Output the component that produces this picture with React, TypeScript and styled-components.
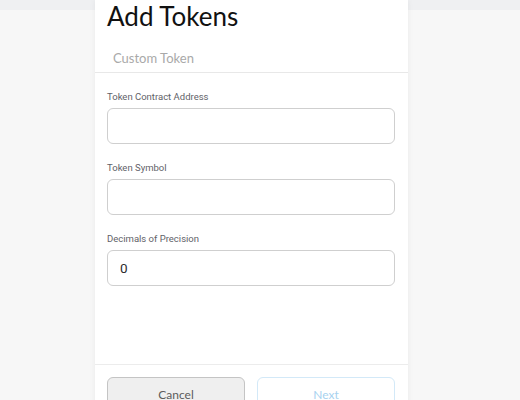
import React from 'react';
import styled, { createGlobalStyle } from 'styled-components';

const GlobalStyle = createGlobalStyle`
  html, body {
    margin: 0;
    padding: 0;
    height: 100%;
    overflow: hidden;
  }
  body {
    background: linear-gradient(#eff0f2 0, #eff0f2 10px, #f7f7f7 10px);
    font-family: Roboto, "Liberation Sans", sans-serif;
  }
`;

const Page = styled.div`
  display: flex;
  padding-left: 95px;
  height: 400px;
`;

const Card = styled.div`
  width: 313px;
  height: 453px;
  background: #fff;
  box-shadow: 0 0 6px rgba(0, 0, 0, 0.06);
  display: flex;
  flex-direction: column;
`;

const Header = styled.div`
  padding: 0 12px;
  border-bottom: 1px solid #e8e8e8;
`;

const Title = styled.h1`
  margin: -1px 0 0;
  font-family: Lato, "Open Sans", sans-serif;
  font-weight: 400;
  font-size: 26px;
  line-height: 34px;
  color: #111;
`;

const Tab = styled.div`
  padding: 17px 0 6px 6px;
  font-family: Lato, "Open Sans", sans-serif;
  font-size: 13px;
  line-height: 16px;
  color: #a9a9a9;
`;

const Form = styled.div`
  flex: 1;
  padding: 17px 12px 0;
  display: flex;
  flex-direction: column;
  gap: 17px;
`;

const Field = styled.div`
  display: flex;
  flex-direction: column;
  gap: 4px;
`;

const Label = styled.label`
  font-size: 9.5px;
  line-height: 14px;
  color: #5f6268;
`;

const Input = styled.input`
  box-sizing: border-box;
  width: 288px;
  height: 36px;
  border: 1px solid #cfcfcf;
  border-radius: 6px;
  padding: 0 12px;
  font-family: Roboto, "Liberation Sans", sans-serif;
  font-size: 13.5px;
  color: #2c2c2c;
  outline: none;
`;

const Footer = styled.div`
  height: 76px;
  border-top: 1px solid #ececec;
  padding: 12px 12px 0;
  display: flex;
  align-items: flex-start;
  gap: 12px;
`;

const Button = styled.button<{ variant: 'default' | 'primary' }>`
  box-sizing: border-box;
  width: 138px;
  height: 33px;
  border-radius: 6px;
  font-family: Lato, "Open Sans", sans-serif;
  font-size: 12px;
  padding: 1px 0 0;
  border: 1px solid ${p => (p.variant === 'primary' ? '#d3e9f8' : '#c4c4c4')};
  background: ${p => (p.variant === 'primary' ? '#fff' : '#efefef')};
  color: ${p => (p.variant === 'primary' ? '#a7d2ef' : '#5c5c5c')};
`;

const fields = [
  { label: 'Token Contract Address', value: '' },
  { label: 'Token Symbol', value: '' },
  { label: 'Decimals of Precision', value: '0' },
];

export default function App() {
  return (
    <>
      <GlobalStyle />
      <Page>
        <Card>
          <Header>
            <Title>Add Tokens</Title>
            <Tab>Custom Token</Tab>
          </Header>
          <Form>
            {fields.map(f => (
              <Field key={f.label}>
                <Label>{f.label}</Label>
                <Input defaultValue={f.value} />
              </Field>
            ))}
          </Form>
          <Footer>
            <Button variant="default">Cancel</Button>
            <Button variant="primary">Next</Button>
          </Footer>
        </Card>
      </Page>
    </>
  );
}
